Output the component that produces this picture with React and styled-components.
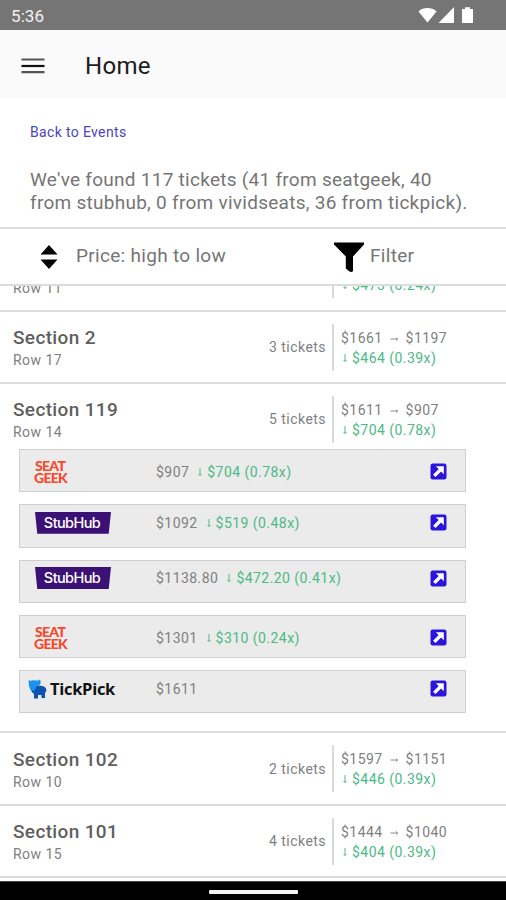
import styled, { createGlobalStyle } from 'styled-components';

const GlobalStyle = createGlobalStyle`
  * {
    box-sizing: border-box;
  }
  body {
    margin: 0;
    background-color: #fff;
    font-family: Roboto, "Liberation Sans", sans-serif;
    color: #757575;
  }
`;

const Screen = styled.div`
  display: flex;
  flex-direction: column;
  width: 506px;
  height: 900px;
  overflow: hidden;
  background-color: #fff;
`;

const StatusBar = styled.div`
  flex: none;
  display: flex;
  align-items: center;
  justify-content: space-between;
  height: 30px;
  padding: 2px 32px 0 11px;
  background-color: #757575;
  color: #f2f2f2;
  font-size: 17px;
  letter-spacing: 0.1px;
`;

const Header = styled.header`
  flex: none;
  display: flex;
  align-items: center;
  gap: 40px;
  height: 68px;
  padding: 3px 21px 0;
  background-color: #fafafa;
`;

const PageTitle = styled.h1`
  margin: 0;
  font-size: 24px;
  font-weight: 400;
  letter-spacing: 0.3px;
  color: #1c1c1c;
`;

const Intro = styled.section`
  flex: none;
  height: 131px;
  padding: 25px 30px 0;
  border-bottom: 2px solid #dcdcdc;
`;

const BackLink = styled.a`
  display: block;
  font-size: 14px;
  line-height: 18px;
  letter-spacing: 0.35px;
  color: #4c44bc;
`;

const Summary = styled.p`
  margin: 27px 0 0;
  font-size: 19px;
  line-height: 23px;
  letter-spacing: 0.27px;
  white-space: pre-line;
`;

const Toolbar = styled.div`
  flex: none;
  display: grid;
  grid-template-columns: 333px 1fr;
  height: 57px;
  border-bottom: 2px solid #dcdcdc;
  font-size: 19px;
`;

const ToolbarItem = styled.button`
  display: flex;
  align-items: center;
  gap: ${({ $gap }) => $gap}px;
  padding: 0 0 0 ${({ $indent }) => $indent}px;
  border: none;
  background: none;
  font: inherit;
  letter-spacing: 0.3px;
  color: inherit;
`;

const ToolbarLabel = styled.span`
  padding-bottom: 2px;
`;

const List = styled.main`
  flex: 1;
  min-height: 0;
  display: flex;
  flex-direction: column;
  justify-content: flex-end;
  overflow: hidden;
  padding-bottom: 3px;
`;

const Listing = styled.article`
  flex: none;
  border-bottom: 2px solid #dcdcdc;
`;

const ListingRow = styled.div`
  display: grid;
  grid-template-columns: 1fr auto 180px;
  grid-template-rows: 47px;
  align-items: center;
  height: ${({ $open }) => ($open ? 65 : 70.3)}px;
  padding: 12px 0 0 13px;
`;

const Section = styled.h2`
  margin: 2px 0 0;
  font-size: 19px;
  font-weight: 500;
  line-height: 24px;
  letter-spacing: 0.35px;
  color: #5f5f5f;
`;

const Small = styled.div`
  font-size: 14px;
  line-height: 20px;
  letter-spacing: 0.45px;
  color: ${({ $saving }) => ($saving ? '#4cba86' : '#808080')};
`;

const Prices = styled.div`
  height: 47px;
  margin-left: 6px;
  padding: 4px 0 0 7px;
  border-left: 2px solid #dadada;
`;

const Offers = styled.div`
  display: grid;
  gap: 12px;
  padding: 0 40px 18px 19px;
`;

const Offer = styled.div`
  display: flex;
  align-items: flex-start;
  height: 43.3px;
  border: 1.5px solid #cfcfcf;
  background-color: #ebebeb;
`;

const OfferBody = styled.div`
  flex: 1;
  display: grid;
  grid-template-columns: 136px 1fr 35px;
  align-items: center;
  height: ${({ $tall }) => ($tall ? 43.5 : 35)}px;
`;

const OfferPrice = styled.div`
  display: flex;
  gap: 7px;
`;

const SeatGeekLogo = styled.div`
  margin-left: 14px;
  font-family: Lato, sans-serif;
  font-size: 14px;
  font-weight: 900;
  line-height: 12px;
  letter-spacing: -0.7px;
  color: #f8472b;
  span {
    display: block;
  }
  span:first-child {
    padding-left: 1px;
  }
`;

const StubHubLogo = styled.div`
  width: 76px;
  height: 22px;
  margin-left: 15px;
  clip-path: polygon(0 0, 100% 0, 97% 100%, 3% 100%);
  background-color: #3b1176;
  color: #fff;
  font-family: Inter, sans-serif;
  font-size: 14.5px;
  font-weight: 500;
  line-height: 22px;
  letter-spacing: -0.6px;
  padding-right: 2px;
  text-align: center;
`;

const TickPickLogo = styled.div`
  display: flex;
  align-items: center;
  gap: 3px;
  margin-left: 8px;
  font-family: "Open Sans", sans-serif;
  font-size: 16.5px;
  font-weight: 700;
  letter-spacing: -0.3px;
  color: #111;
`;

const NavBar = styled.footer`
  flex: none;
  display: flex;
  align-items: center;
  justify-content: center;
  height: 19px;
  border-top: 1px solid #444;
  background-color: #000;
`;

const HomeHandle = styled.div`
  width: 89px;
  height: 4px;
  margin-top: 1px;
  border-radius: 1px;
  background-color: #f4f4f4;
`;

const StatusIcons = () => (
  <svg width="56" height="18" viewBox="0 0 56 18" fill="#fff">
    <path d="M0.5 4.4C5.5 0 13.5 0 18.5 4.4L9.5 15.4Z" />
    <path d="M36 0v16H20.5z" />
    <path d="M44 2h3V0.2h5V2h3v14H44z" />
  </svg>
);

const MenuIcon = () => (
  <svg width="24" height="18" viewBox="0 0 24 18">
    <path d="M0.5 2.5h23M0.5 15.2h23" stroke="#555" strokeWidth="2.2" />
    <path d="M0.5 9h23" stroke="#111" strokeWidth="2.2" />
  </svg>
);

const SortIcon = () => (
  <svg width="18" height="26" viewBox="0 0 18 26">
    <path d="M9 1l8.5 9.5h-17zM9 25l8.5-9.5h-17z" />
  </svg>
);

const FilterIcon = () => (
  <svg width="32" height="32" viewBox="0 0 32 32">
    <path d="M1 1.5h30v2L20 15.5V30q-1 1.5-3.5 0.5L12.8 27.5V15.5L1 3.5z" />
  </svg>
);

const OpenIcon = () => (
  <svg width="17" height="17" viewBox="0 0 17 17">
    <rect x="0.5" y="0.5" width="16" height="16" rx="2.2" fill="#2b14dc" />
    <path d="M5.8 3.2h8v8l-2.7-2.7-5.6 5.6-2.4-2.4 5.6-5.6z" fill="#fff" />
  </svg>
);

const TickPickMark = () => (
  <svg width="19" height="20" viewBox="0 0 19 20">
    <path d="M0.5 1q2 1.5 4 0.2L9 1.5q2 0.5 3-1.3 1.5 4-0.5 5.8L10 8v4H6L2.5 11Q0.5 7 0.5 1z" fill="#1992f0" />
    <path d="M3 10.5l3.5 1.2L8.5 7.5Q12 6.2 16 7.5q2.3 1 2.5 4L17 14v5h-3.5v-3H10v3.5H6V15q-2.5-1-3-4.5z" fill="#0b55b0" />
  </svg>
);

const DownArrow = () => (
  <svg width="6" height="10" viewBox="0 0 6 10" fill="none" stroke="currentColor">
    <path d="M3 1v7.5M1.5 7L3 8.5l1.5-1.5" />
  </svg>
);

const RightArrow = () => (
  <svg width="9" height="6" viewBox="0 0 9 6" fill="none" stroke="currentColor" strokeWidth="0.9">
    <path d="M0.5 4h7M6 2.5L7.7 4 6 5.5" />
  </svg>
);

const PriceLine = styled(Small)`
  display: flex;
  align-items: center;
  gap: ${({ $saving }) => ($saving ? 4 : 7)}px;
  padding-left: ${({ $saving }) => ($saving ? 1 : 0)}px;
`;

const Saving = ({ text }) => (
  <PriceLine $saving>
    <DownArrow />
    {text}
  </PriceLine>
);

const logos = {
  seatgeek: <SeatGeekLogo><span>SEAT</span><span>GEEK</span></SeatGeekLogo>,
  stubhub: <StubHubLogo>StubHub</StubHubLogo>,
  tickpick: <TickPickLogo><TickPickMark />TickPick</TickPickLogo>,
};

const listings = [
  { section: 'Section 3', row: 'Row 11', tickets: '2 tickets', high: '$1958', low: '$1485', saving: '$473 (0.24x)' },
  { section: 'Section 2', row: 'Row 17', tickets: '3 tickets', high: '$1661', low: '$1197', saving: '$464 (0.39x)' },
  {
    section: 'Section 119',
    row: 'Row 14',
    tickets: '5 tickets',
    high: '$1611',
    low: '$907',
    saving: '$704 (0.78x)',
    offers: [
      { vendor: 'seatgeek', price: '$907', saving: '$704 (0.78x)' },
      { vendor: 'stubhub', price: '$1092', saving: '$519 (0.48x)' },
      { vendor: 'stubhub', price: '$1138.80', saving: '$472.20 (0.41x)' },
      { vendor: 'seatgeek', price: '$1301', saving: '$310 (0.24x)' },
      { vendor: 'tickpick', price: '$1611' },
    ],
  },
  { section: 'Section 102', row: 'Row 10', tickets: '2 tickets', high: '$1597', low: '$1151', saving: '$446 (0.39x)' },
  { section: 'Section 101', row: 'Row 15', tickets: '4 tickets', high: '$1444', low: '$1040', saving: '$404 (0.39x)' },
];

function App() {
  return (
    <>
      <GlobalStyle />
      <Screen>
        <StatusBar>
          5:36
          <StatusIcons />
        </StatusBar>
        <Header>
          <MenuIcon />
          <PageTitle>Home</PageTitle>
        </Header>
        <Intro>
          <BackLink>Back to Events</BackLink>
          <Summary>
            {"We've found 117 tickets (41 from seatgeek, 40\nfrom stubhub, 0 from vividseats, 36 from tickpick)."}
          </Summary>
        </Intro>
        <Toolbar>
          <ToolbarItem $indent={40} $gap={18}>
            <SortIcon />
            <ToolbarLabel>Price: high to low</ToolbarLabel>
          </ToolbarItem>
          <ToolbarItem $indent={0} $gap={5}>
            <FilterIcon />
            <ToolbarLabel>Filter</ToolbarLabel>
          </ToolbarItem>
        </Toolbar>
        <List>
          {listings.map((item) => (
            <Listing key={item.section}>
              <ListingRow $open={Boolean(item.offers)}>
                <div>
                  <Section>{item.section}</Section>
                  <Small>{item.row}</Small>
                </div>
                <Small>{item.tickets}</Small>
                <Prices>
                  <PriceLine>
                    {item.high}
                    <RightArrow />
                    {item.low}
                  </PriceLine>
                  <Saving text={item.saving} />
                </Prices>
              </ListingRow>
              {item.offers && (
                <Offers>
                  {item.offers.map((offer) => (
                    <Offer key={offer.price}>
                      <OfferBody $tall={offer.vendor === 'seatgeek'}>
                        {logos[offer.vendor]}
                        <OfferPrice>
                          <Small>{offer.price}</Small>
                          {offer.saving && <Saving text={offer.saving} />}
                        </OfferPrice>
                        <OpenIcon />
                      </OfferBody>
                    </Offer>
                  ))}
                </Offers>
              )}
            </Listing>
          ))}
        </List>
        <NavBar>
          <HomeHandle />
        </NavBar>
      </Screen>
    </>
  );
}

export default App;
